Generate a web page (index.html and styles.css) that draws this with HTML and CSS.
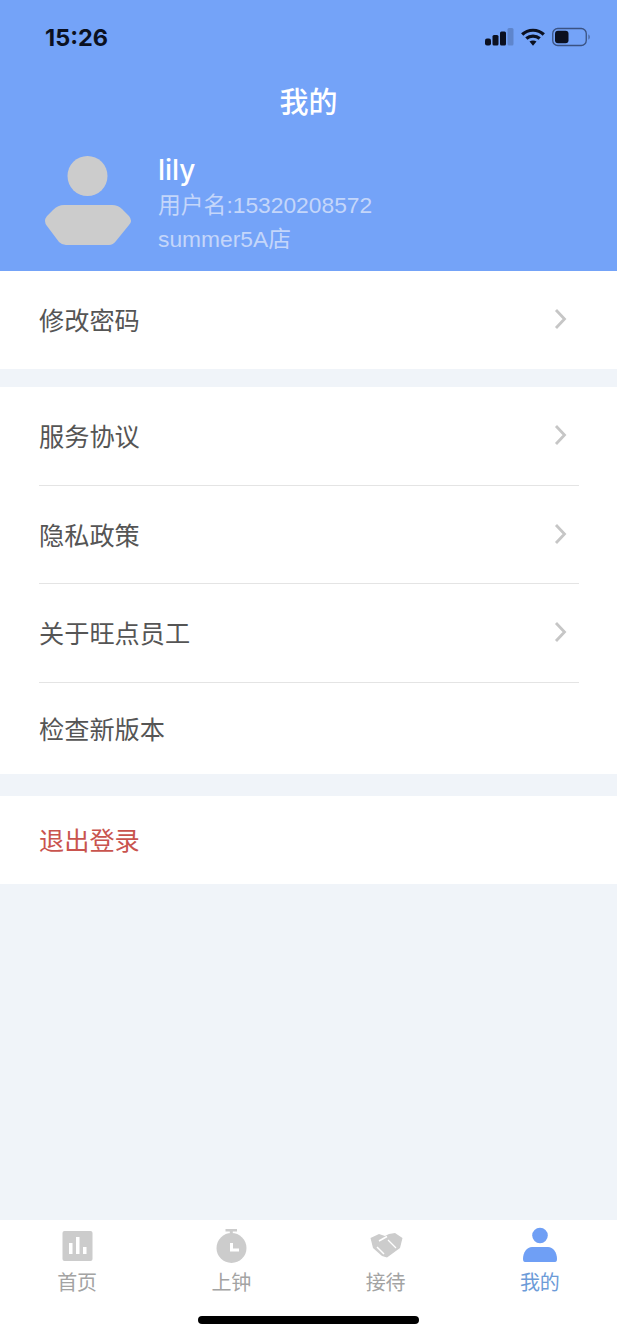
FILE: index.html
```html
<!DOCTYPE html>
<html lang="zh">
<head>
<meta charset="utf-8">
<title>我的</title>
<link rel="stylesheet" href="styles.css">
</head>
<body>
<div class="app">
  <header class="header">
    <div class="status">
      <span class="time">15:26</span>
      <div class="status-icons">
        <svg class="signal" width="29" height="18" viewBox="0 0 29 18"><rect x="0" y="10.500" width="6" height="7" rx="2" fill="#0b1020"/><rect x="7.500" y="7" width="6" height="10.500" rx="1.500" fill="#0b1020"/><rect x="15" y="3.500" width="6" height="14" rx="1.500" fill="#0b1020"/><rect x="22.500" y="0" width="6" height="17.500" rx="1.500" fill="#0b1020" opacity=".2"/></svg>
        <svg class="wifi" width="24" height="18" viewBox="0 0 24 18"><path d="M1.200 6.500C7 .8 17 .8 22.800 6.500" fill="none" stroke="#0b1020" stroke-width="3.200"/><path d="M5.300 10.500C9 7.200 15 7.200 18.700 10.500" fill="none" stroke="#0b1020" stroke-width="3.200"/><path d="M8.500 13.500C10.500 12 13.500 12 15.500 13.500L12 17.800Z" fill="#0b1020"/></svg>
        <svg class="battery" width="39" height="20" viewBox="0 0 39 20"><rect x="0.750" y="1.500" width="33.500" height="17" rx="5" fill="none" stroke="#0b1020" stroke-opacity=".55" stroke-width="1.300"/><rect x="3" y="3.700" width="13.500" height="12.600" rx="3" fill="#0b1020"/><path d="M36.500 7.500C38 8 38 12 36.500 12.500Z" fill="#0b1020" opacity=".5"/></svg>
      </div>
    </div>
    <h1 class="title">我的</h1>
    <div class="profile">
      <svg class="avatar" width="88" height="90" viewBox="0 0 88 90"><circle cx="43.500" cy="20" r="20" fill="#cccccc"/><path d="M20 49H68Q74 49 78 53L85 60Q89 65 85 69L72 85Q69 89 65 89H22Q18 89 15 86L3 70Q-1 65 3 60L9 54Q14 49 20 49Z" fill="#cccccc"/></svg>
      <div class="info">
        <div class="name">lily</div>
        <div class="sub">用户名:15320208572</div>
        <div class="sub">summer5A店</div>
      </div>
    </div>
  </header>

  <main class="content">
    <section class="group group-first">
      <div class="row row-tall row-single"><span class="label">修改密码</span><svg class="chev" width="13" height="22" viewBox="0 0 13 22"><path d="M2 2L10.500 11L2 20" fill="none" stroke="#c6c6c6" stroke-width="2.800"/></svg></div>
    </section>
    <section class="group group-second">
      <div class="row row-tall line"><span class="label">服务协议</span><svg class="chev" width="13" height="22" viewBox="0 0 13 22"><path d="M2 2L10.500 11L2 20" fill="none" stroke="#c6c6c6" stroke-width="2.800"/></svg></div>
      <div class="row row-tall line"><span class="label">隐私政策</span><svg class="chev" width="13" height="22" viewBox="0 0 13 22"><path d="M2 2L10.500 11L2 20" fill="none" stroke="#c6c6c6" stroke-width="2.800"/></svg></div>
      <div class="row row-tall line"><span class="label">关于旺点员工</span><svg class="chev" width="13" height="22" viewBox="0 0 13 22"><path d="M2 2L10.500 11L2 20" fill="none" stroke="#c6c6c6" stroke-width="2.800"/></svg></div>
      <div class="row row-last"><span class="label">检查新版本</span></div>
    </section>
    <section class="group group-third">
      <div class="row row-logout"><span class="label logout">退出登录</span></div>
    </section>
  </main>

  <nav class="tabbar">
    <div class="tab">
      <svg class="tab-icon" width="40" height="40" viewBox="0 0 40 40"><rect x="5.500" y="5" width="30" height="30" rx="2" fill="#cccccc"/><rect x="12" y="17" width="3.500" height="11" fill="#fff"/><rect x="19" y="11" width="3.500" height="17" fill="#fff"/><rect x="26" y="21" width="3.500" height="7" fill="#fff"/></svg>
      <span>首页</span>
    </div>
    <div class="tab">
      <svg class="tab-icon" width="40" height="40" viewBox="0 0 40 40"><rect x="14.500" y="3" width="11.500" height="2.500" fill="#cccccc"/><rect x="18.800" y="4" width="3" height="5" fill="#cccccc"/><circle cx="20.500" cy="22" r="15" fill="#cccccc"/><path d="M20.500 17V24H28" fill="none" stroke="#fff" stroke-width="3"/></svg>
      <span>上钟</span>
    </div>
    <div class="tab">
      <svg class="tab-icon" width="40" height="40" viewBox="0 0 40 40"><path d="M4.500 12L13 8L19 10L23 8L29 7L36.500 12L34 22L21 31.500L16 30L7 22Z" fill="#cccccc"/><path d="M13 15L21 10.500" stroke="#fff" stroke-width="1.500"/><path d="M11 21L18 28" stroke="#fff" stroke-width="1.500"/><path d="M22 14L30 22" stroke="#fff" stroke-width="1.200"/></svg>
      <span>接待</span>
    </div>
    <div class="tab tab-active">
      <svg class="tab-icon" width="40" height="40" viewBox="0 0 40 40"><circle cx="20" cy="9.500" r="7.800" fill="#6f9ff5"/><path d="M12 21H28C33 21 37 26 37 33Q37 36 35 36H5Q3 36 3 33C3 26 7 21 12 21Z" fill="#6f9ff5"/></svg>
      <span>我的</span>
    </div>
    <div class="home-bar"></div>
  </nav>
</div>
</body>
</html>
```

FILE: styles.css
```css
* { box-sizing: border-box; }
html, body { margin: 0; padding: 0; }
body {
  font-family: "Liberation Sans", "Noto Sans CJK SC", sans-serif;
  background: #f0f4f9;
}
.app {
  width: 617px;
  height: 1336px;
  display: flex;
  flex-direction: column;
  overflow: hidden;
}
.header {
  height: 271px;
  background: #74a3f8;
  flex: none;
  color: #fff;
}
.status {
  height: 74px;
  padding: 0 26px 0 45px;
  display: flex;
  justify-content: space-between;
  align-items: center;
}
.time {
  font-family: Inter, "Liberation Sans", sans-serif;
  font-size: 23.500px;
  font-weight: 700;
  color: #0b1020;
}
.status-icons { display: flex; align-items: center; gap: 7px; }
.title {
  margin: 0;
  font-size: 29px;
  line-height: 58px;
  font-weight: 500;
  text-align: center;
  height: 56px;
}
.profile {
  margin-top: -1px;
  padding: 0 0 0 44px;
  display: flex;
  align-items: flex-start;
  gap: 26px;
}
.avatar { margin-top: 27px; flex: none; overflow: visible; }
.info { margin-top: 23px; }
.name {
  font-size: 28px;
  line-height: 36px;
  font-weight: 500;
  font-family: Inter, "Liberation Sans", sans-serif;
}
.sub {
  font-size: 22.800px;
  line-height: 34px;
  color: #c4d6fa;
}
.content { flex: 1; }
.group { background: #fff; }
.group-first { height: 98px; }
.group-second { margin-top: 18px; height: 387px; }
.group-third { margin-top: 22px; height: 88px; }
.row {
  display: flex;
  align-items: center;
  justify-content: space-between;
  margin: 0 38px 0 39px;
  padding-right: 12px;
}
.row-tall { height: 98px; padding-bottom: 1px; }
.row-single { padding-bottom: 3px; }
.line { border-bottom: 1px solid #e4e4e4; height: 98.500px; }
.row-last { height: 91px; padding-bottom: 0; }
.row-logout { height: 88px; padding-bottom: 2px; }
.label { font-size: 25.200px; color: #555555; }
.logout { color: #c9544e; }
.tabbar {
  position: relative;
  height: 116px;
  flex: none;
  background: #fff;
  display: flex;
  padding-top: 6px;
}
.tab {
  width: 25%;
  display: flex;
  flex-direction: column;
  align-items: center;
  font-size: 20px;
  color: #a3a3a3;
}
.tab-icon { display: block; }
.tab span { line-height: 32px; margin-top: 1px; }
.tab-active { color: #6c9bd8; }
.home-bar {
  position: absolute;
  left: 198px;
  top: 96px;
  width: 221px;
  height: 8px;
  background: #000;
  border-radius: 4px;
}
```
